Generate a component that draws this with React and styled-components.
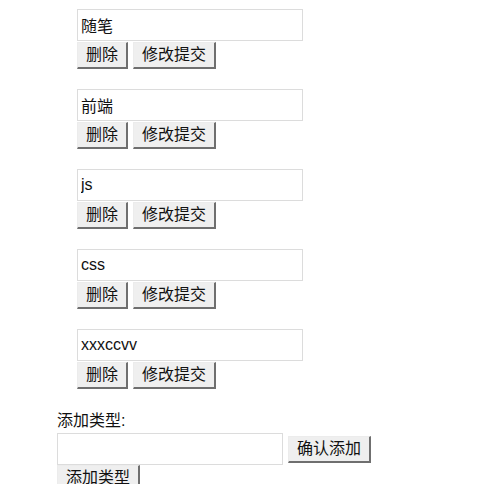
import React from 'react';
import styled, { createGlobalStyle } from 'styled-components';

const GlobalStyle = createGlobalStyle`
  body {
    margin: 0;
    background: #fff;
    font-family: "Liberation Sans", "Noto Sans CJK SC", sans-serif;
    font-size: 16px;
    color: #111;
  }
`;

const categories = ['随笔', '前端', 'js', 'css', 'xxxccvv'];

class App extends React.Component {
  constructor(props) {
    super(props);
    this.state = {
      items: categories,
      newName: ''
    };
  }

  handleNewNameChange = (event) => {
    this.setState({ newName: event.target.value });
  }

  render() {
    return (
      <Page>
        <GlobalStyle />
        <List>
          {this.state.items.map(name => (
            <Item key={name}>
              <NameInput type="text" defaultValue={name} />
              <Actions>
                <Button>删除</Button>
                <Button>修改提交</Button>
              </Actions>
            </Item>
          ))}
        </List>
        <AddSection>
          <Label>添加类型:</Label>
          <AddRow>
            <NameInput type="text" value={this.state.newName} onChange={this.handleNewNameChange} />
            <Button $spaced>确认添加</Button>
          </AddRow>
          <Button>添加类型</Button>
        </AddSection>
      </Page>
    );
  }
}

const Page = styled.div`
  padding: 9px 0 0 57px;
`;

const List = styled.div`
  display: flex;
  flex-direction: column;
  gap: 20px;
  padding-left: 20px;
`;

const Item = styled.div`
  display: flex;
  flex-direction: column;
  align-items: flex-start;
  gap: 1px;
`;

const Actions = styled.div`
  display: flex;
  gap: 5px;
`;

const NameInput = styled.input`
  box-sizing: border-box;
  width: 226px;
  height: 32px;
  margin: 0;
  padding: 0 3px;
  border: 1px solid #dcdcdc;
  background: #fff;
  font: inherit;
  font-size: 16px;
  color: #111;
  outline: none;
`;

const Button = styled.button`
  box-sizing: border-box;
  height: 27px;
  margin: 0 0 0 ${props => (props.$spaced ? '5px' : '0')};
  padding: 0 8px;
  border-style: solid;
  border-width: 1px 2px 2px 1px;
  border-color: #ececec #6f6f6f #6f6f6f #ececec;
  background: #efefef;
  font-family: "Liberation Sans", "Noto Sans CJK SC", sans-serif;
  font-size: 16px;
  color: #111;
  line-height: 1;
  cursor: pointer;
`;

const AddSection = styled.div`
  display: flex;
  flex-direction: column;
  align-items: flex-start;
  margin-top: 20px;
`;

const Label = styled.div`
  height: 24px;
  line-height: 24px;
`;

const AddRow = styled.div`
  display: flex;
  align-items: center;
`;

export default App;
